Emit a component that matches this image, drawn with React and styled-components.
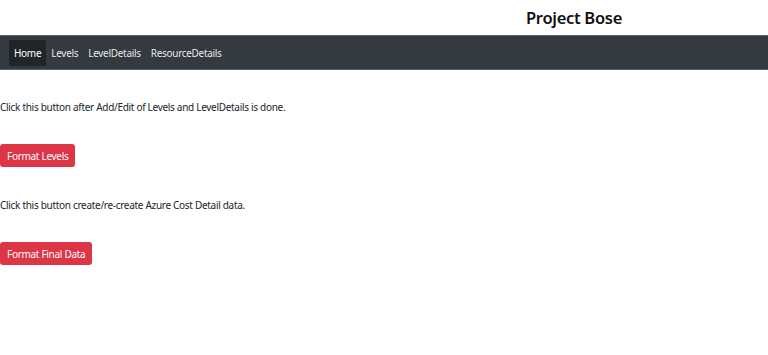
import React from "react"
import styled, { createGlobalStyle } from "styled-components"

const GlobalStyle = createGlobalStyle`
  body {
    margin: 0;
    background: #fff;
    font-family: "Noto Sans", "Open Sans", sans-serif;
    color: #212529;
  }
`

const navLinks = ["Home", "Levels", "LevelDetails", "ResourceDetails"]

const steps = [
  {
    note: "Click this button after Add/Edit of Levels and LevelDetails is done.",
    label: "Format Levels",
  },
  {
    note: "Click this button create/re-create Azure Cost Detail data.",
    label: "Format Final Data",
  },
]

const App = () => (
  <>
    <GlobalStyle />
    <HeaderStyle>
      <TitleStyle>Project Bose</TitleStyle>
    </HeaderStyle>
    <NavStyle>
      {navLinks.map((name, i) => (
        <NavLinkStyle key={name} $active={i === 0}>
          {name}
        </NavLinkStyle>
      ))}
    </NavStyle>
    <MainStyle>
      {steps.map(step => (
        <StepStyle key={step.label}>
          <NoteStyle>{step.note}</NoteStyle>
          <ButtonStyle>{step.label}</ButtonStyle>
        </StepStyle>
      ))}
    </MainStyle>
  </>
)

const HeaderStyle = styled.header`
  height: 35px;
  display: flex;
  align-items: center;
  padding-left: 526px;
  box-sizing: border-box;
`

const TitleStyle = styled.h1`
  margin: 0;
  font-size: 16.5px;
  font-weight: 600;
  color: #111;
  letter-spacing: -0.3px;
`

const NavStyle = styled.nav`
  display: flex;
  align-items: center;
  height: 35px;
  box-sizing: border-box;
  background: #343a40;
  border-top: 1px solid #5a5f65;
  border-bottom: 1px solid #5a5f65;
  padding: 0 9px;
`

const NavLinkStyle = styled.a`
  display: flex;
  align-items: center;
  height: 26px;
  padding: 0 5px;
  font-size: 10px;
  letter-spacing: -0.3px;
  color: ${p => (p.$active ? "#fff" : "rgba(255, 255, 255, 0.9)")};
  background: ${p => (p.$active ? "#212529" : "transparent")};
  cursor: pointer;
`

const MainStyle = styled.main`
  display: flex;
  flex-direction: column;
  padding-top: 29px;
  gap: 30px;
`

const StepStyle = styled.section`
  display: flex;
  flex-direction: column;
  align-items: flex-start;
  gap: 29px;
`

const NoteStyle = styled.p`
  margin: 0;
  font-size: 10px;
  letter-spacing: -0.3px;
  line-height: 16px;
`

const ButtonStyle = styled.button`
  height: 23px;
  padding: 0 7px;
  border: none;
  border-radius: 3px;
  background: #dc3545;
  color: #fff;
  font-family: inherit;
  font-size: 10px;
  letter-spacing: -0.3px;
  cursor: pointer;
`

export default App
